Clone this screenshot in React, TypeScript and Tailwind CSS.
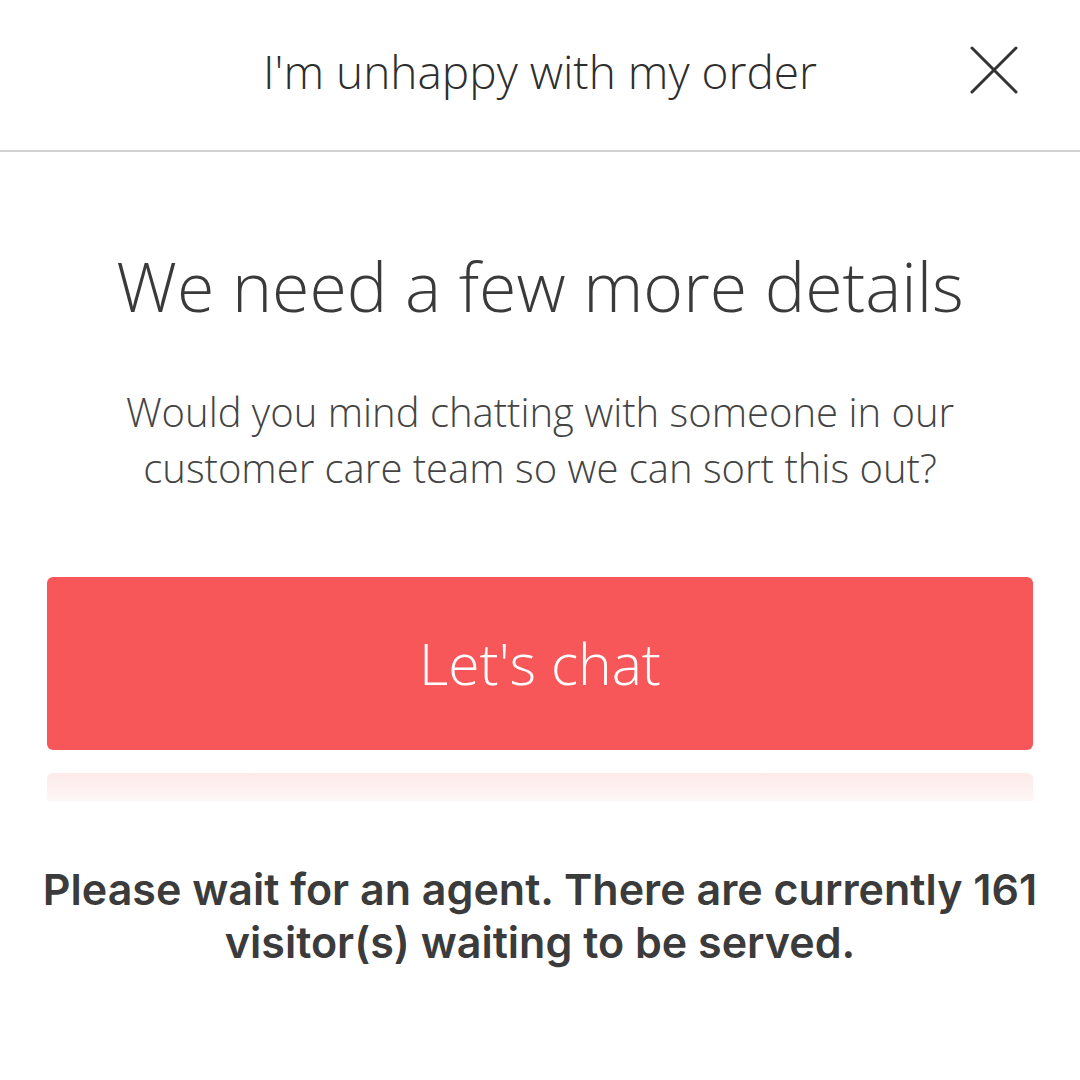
import React from "react";

export default function App() {
  return (
    <div className="w-[1080px] h-[1080px] bg-white flex flex-col overflow-hidden" style={{ fontFamily: '"Open Sans", "Liberation Sans", sans-serif' }}>
      <header className="h-[152px] shrink-0 grid grid-cols-[1fr_auto_1fr] items-center border-b-2 border-[#d2d2d2] rounded-tl-[18px]">
        <div />
        <h1 className="text-[46px] font-light text-[#2e2e2e] leading-none pb-[8px]">I'm unhappy with my order</h1>
        <div className="flex justify-end pr-[62px] pb-[10px]">
          <svg width="48" height="48" viewBox="0 0 48 48" fill="none" stroke="#333" strokeWidth="3" strokeLinecap="round">
            <path d="M2 2 L46 46 M46 2 L2 46" />
          </svg>
        </div>
      </header>
      <main className="flex flex-col items-center px-[47px]">
        <h2 className="mt-[100px] text-[68px] font-light text-[#3a3a3a] leading-none">We need a few more details</h2>
        <p className="mt-[64px] text-[40px] font-light text-[#444] leading-[56px] text-center">
          Would you mind chatting with someone in our
          <br />
          customer care team so we can sort this out?
        </p>
        <button className="mt-[81px] w-full h-[173px] rounded-[6px] bg-[#f75758] text-white text-[57px] font-light flex items-center justify-center">
          Let's chat
        </button>
        <div className="mt-[23px] w-full h-[28px] rounded-t-[6px] bg-gradient-to-b from-[#fdeaea] to-[#fef6f6]" />
        <p className="mt-[62px] text-[43px] font-semibold text-[#3b3b3b] leading-[53px] text-center whitespace-nowrap" style={{ fontFamily: 'Inter, "Liberation Sans", sans-serif' }}>
          Please wait for an agent. There are currently 161
          <br />
          visitor(s) waiting to be served.
        </p>
      </main>
    </div>
  );
}
